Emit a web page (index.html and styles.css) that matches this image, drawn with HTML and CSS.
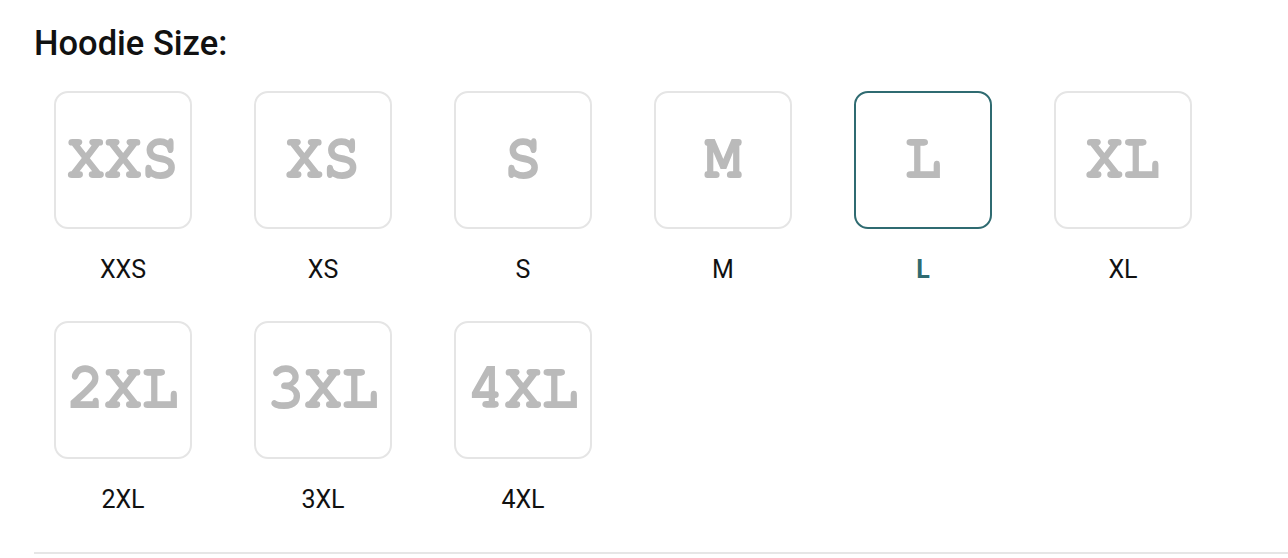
FILE: index.html
```html
<!DOCTYPE html>
<html>
<head>
<meta charset="utf-8">
<link rel="stylesheet" href="styles.css">
</head>
<body>
<div class="picker">
  <h2 class="title">Hoodie Size:</h2>
  <div class="grid">
    <div class="opt"><div class="box"><span class="glyph">XXS</span></div><div class="label">XXS</div></div>
    <div class="opt"><div class="box"><span class="glyph">XS</span></div><div class="label">XS</div></div>
    <div class="opt"><div class="box"><span class="glyph">S</span></div><div class="label">S</div></div>
    <div class="opt"><div class="box"><span class="glyph">M</span></div><div class="label">M</div></div>
    <div class="opt selected"><div class="box"><span class="glyph">L</span></div><div class="label">L</div></div>
    <div class="opt"><div class="box"><span class="glyph">XL</span></div><div class="label">XL</div></div>
    <div class="opt"><div class="box"><span class="glyph">2XL</span></div><div class="label">2XL</div></div>
    <div class="opt"><div class="box"><span class="glyph">3XL</span></div><div class="label">3XL</div></div>
    <div class="opt"><div class="box"><span class="glyph">4XL</span></div><div class="label">4XL</div></div>
  </div>
  <div class="divider"></div>
</div>
</body>
</html>
```
FILE: styles.css
```css
html, body {
  margin: 0;
  padding: 0;
  background: #fff;
}
.picker {
  padding: 0 0 0 34px;
  font-family: Roboto, "Liberation Sans", sans-serif;
  color: #111;
}
.title {
  margin: 0;
  padding-top: 23px;
  font-size: 34.5px;
  font-weight: 500;
  line-height: 40px;
  color: #111;
}
.grid {
  display: grid;
  grid-template-columns: repeat(6, 178px);
  column-gap: 22px;
  row-gap: 39px;
  margin-top: 28px;
}
.opt {
  display: flex;
  flex-direction: column;
  align-items: center;
}
.box {
  width: 134px;
  height: 134px;
  border: 2px solid #e5e5e5;
  border-radius: 14px;
  display: flex;
  align-items: center;
  justify-content: center;
}
.glyph {
  font-family: "Nimbus Mono PS", "Nimbus Mono L", FreeMono, "Courier 10 Pitch", Courier, "Liberation Serif", serif;
  font-weight: 700;
  font-size: 62px;
  color: #bababa;
  filter: blur(0.7px);
  line-height: 1;
  margin-top: -6px;
  transform: scaleY(1.08);
}
.label {
  margin-top: 29px;
  font-size: 25px;
  line-height: 24px;
  color: #111;
}
.selected .box {
  border-color: #2f6b71;
}
.selected .label {
  color: #2f6b71;
  font-weight: 700;
}
.divider {
  margin-top: 40px;
  height: 2px;
  background: #e6e6e6;
}
```
